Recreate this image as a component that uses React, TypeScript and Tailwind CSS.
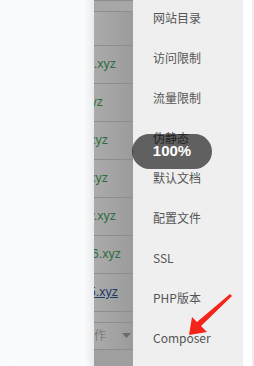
import React from 'react';

const rows = [
  { text: 'baota.xyz', pr: 'pr-[17px]', link: false },
  { text: 'demo.xyz', pr: 'pr-[30px]', link: false },
  { text: 'test.xyz', pr: 'pr-[25px]', link: false },
  { text: 'site.xyz', pr: 'pr-[25px]', link: false },
  { text: 'www.xyz', pr: 'pr-[17px]', link: false },
  { text: 'web126.xyz', pr: 'pr-[12px]', link: false },
  { text: 'web125.xyz', pr: 'pr-[15px]', link: true },
];

const menu = ['网站目录', '访问限制', '流量限制', '伪静态', '默认文档', '配置文件', 'SSL', 'PHP版本', 'Composer'];

const App = () => {
  return (
    <div className="relative flex h-[366px] w-[254px] overflow-hidden bg-[#fafbfd] font-['Liberation_Sans','Noto_Sans_CJK_SC',sans-serif]">
      {/* dimmed page */}
      <div className="w-[94px] shrink-0 bg-gradient-to-r from-[#fafbfd] from-90% to-[#e9eaec]" />

      {/* table column under overlay */}
      <div className="flex w-[39px] shrink-0 flex-col bg-gradient-to-r from-[#ababab] to-[#9b9b9b] text-[12.5px] text-[#2c6d3c]">
        <div className="h-[12px] border-y border-[#8d8d8d] bg-[#a7a7a7]" />
        <div className="h-[34px] border-b border-[#8d8d8d]" />
        {rows.map((r, i) => (
          <div key={i} className={`flex h-[38px] items-center justify-end overflow-hidden whitespace-nowrap border-b border-[#8d8d8d] ${r.pr}`}>
            <span className={r.link ? 'text-[#1e3a68] underline' : ''}>{r.text}</span>
          </div>
        ))}
        <div className="h-[11px] border-b border-[#8d8d8d]" />
        <div className="flex h-[27px] items-center justify-between overflow-hidden whitespace-nowrap border-b border-[#8d8d8d] pr-[2px] text-[12px] text-[#7b7b7b]">
          <span>作</span>
          <svg width="9" height="6" viewBox="0 0 9 6">
            <polygon points="0,0 9,0 4.5,5" fill="#6b6b6b" />
          </svg>
        </div>
        <div className="flex-1 bg-[#9f9f9f]" />
      </div>

      {/* side menu */}
      <div className="w-[110px] shrink-0 bg-[#efefef] pl-[20px] font-['Noto_Sans_CJK_SC',sans-serif] text-[12px] text-[#555]">
        <div className="-mt-[2px] flex flex-col">
          {menu.map((m) => (
            <div key={m} className="flex h-[40px] items-center">
              {m}
            </div>
          ))}
        </div>
      </div>

      <div className="w-[9px] shrink-0 bg-white" />
      <div className="w-[2px] shrink-0 bg-[#efefef]" />

      {/* loading badge */}
      <div className="absolute left-[132px] top-[134px] flex h-[35px] w-[80px] items-center justify-center rounded-full bg-black/60 font-['Liberation_Sans',sans-serif] text-[15px] font-bold text-white">
        100%
      </div>

      {/* red arrow */}
      <svg className="absolute left-0 top-0" width="254" height="366" viewBox="0 0 254 366">
        <polygon points="189,335 192,317 197,322 230,294 232,296 201,326 207,332" fill="#f5231a" />
      </svg>
    </div>
  );
};

export default App;
